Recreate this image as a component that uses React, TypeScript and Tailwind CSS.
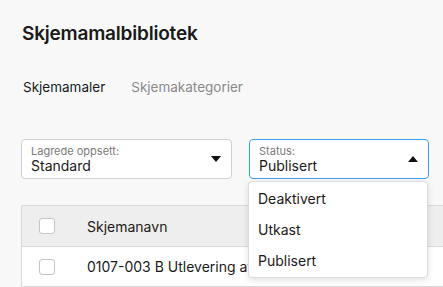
import React from "react";

const Caret = ({ up }: { up?: boolean }) => (
  <svg width="10" height="6" viewBox="0 0 10 6" className="shrink-0">
    {up ? <path d="M0 6 L5 0 L10 6 Z" fill="#111" /> : <path d="M0 0 L10 0 L5 6 Z" fill="#111" />}
  </svg>
);

const Checkbox = () => (
  <div className="w-[16px] h-[16px] rounded-[3px] border border-[#c4c4c4] bg-white" />
);

export default function App() {
  return (
    <div
      className="w-[443px] h-[287px] overflow-hidden bg-[#f8f8f8] text-[#1a1a1a] relative"
      style={{ fontFamily: "Inter, 'Noto Sans', sans-serif" }}
    >
      <div className="pl-[22px] pt-[22px]">
        <h1 className="text-[19px] leading-[24px] font-semibold tracking-[-0.2px]">Skjemamalbibliotek</h1>
      </div>
      <div className="flex gap-[26px] pl-[23px] pt-[32px] text-[13.5px] leading-[18px]">
        <span className="text-[#1a1a1a]">Skjemamaler</span>
        <span className="text-[#8a8a8a]">Skjemakategorier</span>
      </div>
      <div className="flex gap-[17px] pl-[21px] pt-[43px]">
        <div className="w-[211px] h-[40px] rounded-[4px] border border-[#cfcfcf] bg-white flex items-center pl-[9px] pr-[10px]">
          <div className="flex-1 flex flex-col pt-[1px]">
            <span className="text-[11px] leading-[12px] text-[#7a7a7a]">Lagrede oppsett:</span>
            <span className="text-[14px] leading-[17px]">Standard</span>
          </div>
          <Caret />
        </div>
        <div className="w-[180px] h-[40px] rounded-[4px] border border-[#3d9df2] bg-white flex items-center pl-[9px] pr-[10px]">
          <div className="flex-1 flex flex-col pt-[1px]">
            <span className="text-[11px] leading-[12px] text-[#7a7a7a]">Status:</span>
            <span className="text-[14px] leading-[17px]">Publisert</span>
          </div>
          <Caret up />
        </div>
      </div>
      <div className="ml-[21px] mt-[26px] border-l border-t border-[#d9d9d9] bg-white">
        <div className="h-[41px] bg-[#eeeeee] flex items-center border-b border-[#d9d9d9]">
          <div className="w-[65px] flex pl-[17px]"><Checkbox /></div>
          <span className="text-[14px]">Skjemanavn</span>
        </div>
        <div className="h-[40px] flex items-center border-b border-[#d9d9d9]">
          <div className="w-[65px] flex pl-[17px]"><Checkbox /></div>
          <span className="text-[14px] whitespace-nowrap">0107-003 B Utlevering av legemidler</span>
        </div>
      </div>
      <div className="absolute left-[248px] top-[181px] w-[180px] h-[97px] bg-white border border-[#dcdcdc] rounded-[4px] shadow-[0_2px_6px_rgba(0,0,0,0.12)] flex flex-col py-[1px]">
        {["Deaktivert", "Utkast", "Publisert"].map((t) => (
          <div key={t} className="h-[32px] flex items-center pl-[9px] text-[14px]">{t}</div>
        ))}
      </div>
    </div>
  );
}
